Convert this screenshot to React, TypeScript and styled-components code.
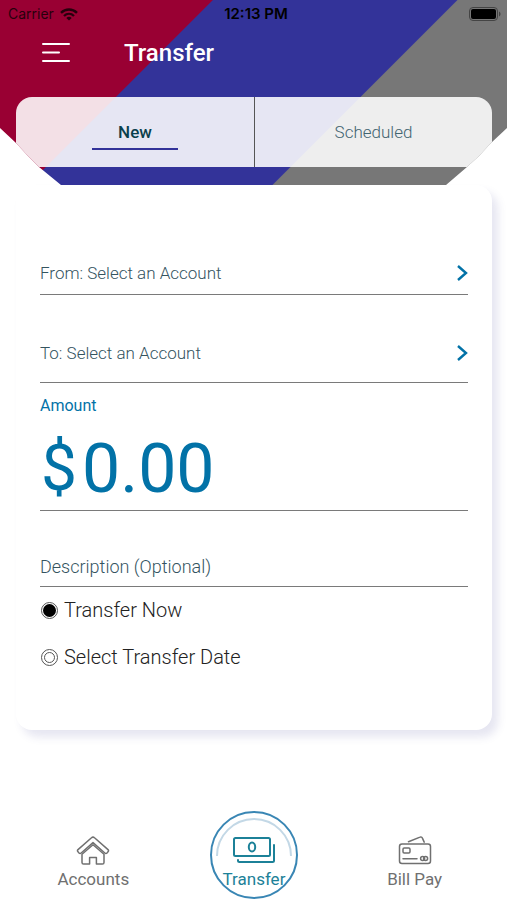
import React, { useState } from 'react';
import styled, { createGlobalStyle } from 'styled-components';

const GlobalStyle = createGlobalStyle`
  *, *::before, *::after { box-sizing: border-box; }
  body {
    margin: 0;
    background: #fff;
    font-family: Roboto, "Liberation Sans", sans-serif;
    -webkit-font-smoothing: antialiased;
  }
  button, input { font: inherit; }
`;

const Screen = styled.div`
  display: flex;
  flex-direction: column;
  min-height: 100vh;
`;

const Header = styled.header`
  padding: 0 15px 18px 16px;
  background: linear-gradient(135deg, #990033 0 150px, #333399 151px 323px, #777777 324px);
  clip-path: polygon(
    0 0, 100% 0, 100% 128px,
    calc(100% - 16px) 143px, calc(100% - 28px) 156px, calc(100% - 40px) 167px, calc(100% - 61px) 100%,
    61px 100%, 39px 167px, 28px 156px, 16px 143px, 0 128px
  );
`;

const StatusBar = styled.div`
  display: grid;
  grid-template-columns: 1fr auto 1fr;
  align-items: center;
  height: 28px;
  margin: 0 -9px 0 -8px;
  color: #000;
  font-family: Inter, "Liberation Sans", sans-serif;
  font-size: 14px;
  line-height: 16px;
`;

const Carrier = styled.span`
  display: flex;
  align-items: center;
  gap: 6px;
  opacity: 0.75;
`;

const Clock = styled.time`
  padding-left: 3px;
  font-size: 15px;
  font-weight: 600;
`;

const Battery = styled.span`
  display: flex;
  justify-content: flex-end;
`;

const TitleBar = styled.div`
  display: flex;
  align-items: center;
  gap: 54px;
  height: 69px;
  padding: 0 0 20px 26px;
`;

const MenuButton = styled.button`
  display: flex;
  padding: 0;
  border: 0;
  background: none;
  cursor: pointer;
`;

const Title = styled.h1`
  margin: 0;
  color: #fff;
  font-size: 24px;
  line-height: 32px;
  font-weight: 500;
`;

const Tabs = styled.div`
  display: grid;
  grid-template-columns: 1fr 1fr;
  height: 70px;
  border-radius: 16px 16px 0 0;
  overflow: hidden;
  background: rgba(255, 255, 255, 0.88);
`;

const Tab = styled.button<{ $active: boolean }>`
  display: flex;
  flex-direction: column;
  align-items: center;
  gap: 6px;
  padding: 25px 0 0;
  border: 0;
  background: none;
  color: ${(p) => (p.$active ? '#0b3f4c' : '#426471')};
  font-size: 17px;
  line-height: 20px;
  font-weight: ${(p) => (p.$active ? 500 : 300)};
  cursor: pointer;

  & + & { border-left: 1px solid #555; }

  &::after {
    content: '';
    width: 86px;
    height: 2px;
    background: ${(p) => (p.$active ? '#333399' : 'transparent')};
  }
`;

const Card = styled.form`
  margin: 0 15px 0 16px;
  padding: 64px 24px 61px;
  border-radius: 16px;
  background: #fff;
  box-shadow: 6px 7px 8px rgba(60, 60, 150, 0.13);
`;

const AccountRow = styled.button<{ $above: number; $below: number }>`
  display: flex;
  align-items: center;
  justify-content: space-between;
  width: 100%;
  padding: ${(p) => p.$above}px 0 ${(p) => p.$below}px;
  border: 0;
  border-bottom: 1px solid #7a7a7a;
  background: none;
  color: #34545f;
  font-size: 17px;
  line-height: 24px;
  font-weight: 300;
  text-align: left;
  cursor: pointer;
`;

const AmountField = styled.div`
  display: grid;
  grid-template-columns: 42px 1fr;
  row-gap: 12px;
  padding: 12px 0 1px;
  border-bottom: 1px solid #7a7a7a;
  color: #0272a7;
`;

const AmountLabel = styled.label`
  grid-column: 1 / -1;
  font-size: 16px;
  line-height: 22px;
`;

const Currency = styled.span`
  padding-left: 1px;
  font-size: 64px;
  line-height: 80px;
`;

const AmountInput = styled.input`
  width: 100%;
  min-width: 0;
  height: 80px;
  padding: 0;
  border: 0;
  outline: 0;
  background: none;
  color: inherit;
  font-size: 68px;
`;

const DescriptionInput = styled.input`
  display: block;
  width: 100%;
  height: 76px;
  padding: 36px 0 0;
  border: 0;
  border-bottom: 1px solid #7a7a7a;
  border-radius: 0;
  outline: 0;
  background: none;
  color: #34545f;
  font-size: 18px;
  font-weight: 300;

  &::placeholder { color: inherit; opacity: 1; }
`;

const Choices = styled.fieldset`
  display: grid;
  gap: 23px;
  margin: 0;
  padding: 11px 0 0 1px;
  border: 0;
`;

const Choice = styled.label`
  display: flex;
  align-items: center;
  gap: 6px;
  color: #222;
  font-size: 20px;
  line-height: 24px;
  font-weight: 300;
`;

const Radio = styled.input`
  appearance: none;
  display: grid;
  place-items: center;
  width: 17px;
  height: 17px;
  margin: 0;
  border: 1px solid #555;
  border-radius: 50%;

  &::before {
    content: '';
    width: 11px;
    height: 11px;
    border: 1px solid #555;
    border-radius: 50%;
  }

  &:checked::before {
    width: 13px;
    height: 13px;
    border: 0;
    background: #000;
  }
`;

const Nav = styled.nav`
  display: grid;
  grid-template-columns: repeat(3, 1fr);
  justify-items: center;
  margin-top: auto;
  padding: 0 12px 1px 13px;
`;

const NavLink = styled.a<{ $active?: boolean }>`
  position: relative;
  display: flex;
  flex-direction: column;
  align-items: center;
  gap: 2px;
  width: 88px;
  height: 88px;
  padding-top: 23px;
  color: ${(p) => (p.$active ? '#1c8198' : '#707070')};
  border: 2px solid ${(p) => (p.$active ? '#3986b4' : 'transparent')};
  border-radius: 50%;
  font-size: 17px;
  line-height: 22px;
  text-decoration: none;
  white-space: nowrap;
`;

const Halo = styled.svg`
  position: absolute;
  inset: 0;
`;

const Chevron = () => (
  <svg width="12" height="18" viewBox="0 0 12 18" fill="none" stroke="#0272a7" strokeWidth="2.4" aria-hidden="true">
    <path d="M2 2l8 7-8 7" />
  </svg>
);

const WifiIcon = () => (
  <svg width="18" height="13" viewBox="0 0 18 13" fill="none" stroke="#000" strokeWidth="2.4" aria-hidden="true">
    <path d="M1 4.800C5.500 .4 12.500 .4 17 4.800M4 8c2.900-2.800 7.100-2.800 10 0" />
    <path d="M6.300 9.900c1.600-1.400 3.800-1.400 5.400 0L9 12.600z" fill="#000" stroke="none" />
  </svg>
);

const BatteryIcon = () => (
  <svg width="32" height="14" viewBox="0 0 32 14" aria-hidden="true">
    <rect x=".5" y=".5" width="28" height="13" rx="3.5" fill="none" stroke="#444" />
    <rect x="2" y="2" width="25" height="10" rx="2" />
    <path d="M30 4.500c2 .8 2 4.200 0 5z" fill="#444" />
  </svg>
);

const MenuIcon = () => (
  <svg width="28" height="20" viewBox="0 0 28 20" stroke="#fff" strokeWidth="2" strokeLinecap="round" aria-hidden="true">
    <path d="M1 1h26M1 9.500h16M1 18h26" />
  </svg>
);

const HouseIcon = () => (
  <svg width="34" height="30" viewBox="0 0 34 30" fill="none" stroke="currentColor" strokeWidth="1.5" strokeLinejoin="round" aria-hidden="true">
    <path d="M15.500 1.800a2.200 2.200 0 0 1 3 0L32 13.600a1.600 1.600 0 0 1 0 2.200l-1 1.200a1.600 1.600 0 0 1-2.200 0L17 6.600 5.200 17a1.600 1.600 0 0 1-2.200 0l-1-1.200a1.600 1.600 0 0 1 0-2.200z" />
    <path d="M6 18.200v8.300a1.600 1.600 0 0 0 1.600 1.600h6V21.500h6.800v6.600h6a1.600 1.600 0 0 0 1.600-1.600v-8.300L17 8.700z" />
  </svg>
);

const CashIcon = () => (
  <svg width="42" height="30" viewBox="0 0 42 30" fill="none" stroke="currentColor" strokeWidth="2" strokeLinecap="round" aria-hidden="true">
    <rect x="1" y="2" width="36" height="18" rx="1.5" />
    <ellipse cx="19" cy="11" rx="3.2" ry="4.6" />
    <path d="M41 9v15.500a1.500 1.500 0 0 1-1.500 1.500H6.500a1.500 1.500 0 0 1-1.500-1.500V24" />
  </svg>
);

const CardsIcon = () => (
  <svg width="34" height="30" viewBox="0 0 34 30" fill="none" stroke="currentColor" strokeWidth="1.5" strokeLinecap="round" strokeLinejoin="round" aria-hidden="true">
    <rect x="1.5" y="8" width="31" height="19.5" rx="2.5" />
    <path d="M10.500 5.700L22 1.100a1.800 1.800 0 0 1 2.400 1l1.800 4M5 22.700h14" />
    <rect x="5" y="12" width="7" height="5" rx="1.2" />
    <circle cx="24.6" cy="22.5" r="2" />
    <circle cx="27.6" cy="22.5" r="2" />
  </svg>
);

export default function App() {
  const [tab, setTab] = useState('New');
  const [amount, setAmount] = useState('0.00');

  return (
    <Screen>
      <GlobalStyle />
      <Header>
        <StatusBar>
          <Carrier>Carrier <WifiIcon /></Carrier>
          <Clock>12:13 PM</Clock>
          <Battery><BatteryIcon /></Battery>
        </StatusBar>
        <TitleBar>
          <MenuButton type="button" aria-label="Menu"><MenuIcon /></MenuButton>
          <Title>Transfer</Title>
        </TitleBar>
        <Tabs role="tablist">
          {['New', 'Scheduled'].map((name) => (
            <Tab key={name} type="button" role="tab" aria-selected={tab === name} $active={tab === name} onClick={() => setTab(name)}>
              {name}
            </Tab>
          ))}
        </Tabs>
      </Header>

      <Card>
        <AccountRow type="button" $above={12} $below={9}>From: Select an Account<Chevron /></AccountRow>
        <AccountRow type="button" $above={46} $below={17}>To: Select an Account<Chevron /></AccountRow>
        <AmountField>
          <AmountLabel htmlFor="amount">Amount</AmountLabel>
          <Currency>$</Currency>
          <AmountInput id="amount" inputMode="decimal" value={amount} onChange={(e) => setAmount(e.target.value)} />
        </AmountField>
        <DescriptionInput aria-label="Description (Optional)" placeholder="Description (Optional)" />
        <Choices aria-label="Transfer timing">
          <Choice><Radio type="radio" name="when" defaultChecked />Transfer Now</Choice>
          <Choice><Radio type="radio" name="when" />Select Transfer Date</Choice>
        </Choices>
      </Card>

      <Nav>
        <NavLink href="#accounts"><HouseIcon />Accounts</NavLink>
        <NavLink href="#transfer" $active aria-current="page">
          <Halo width="84" height="84" viewBox="0 0 84 84" fill="none" stroke="#c3d8e6" strokeWidth="2" aria-hidden="true">
            <path d="M5 43a37 37 0 0 1 74 0" />
          </Halo>
          <CashIcon />Transfer
        </NavLink>
        <NavLink href="#bill-pay"><CardsIcon />Bill Pay</NavLink>
      </Nav>
    </Screen>
  );
}
